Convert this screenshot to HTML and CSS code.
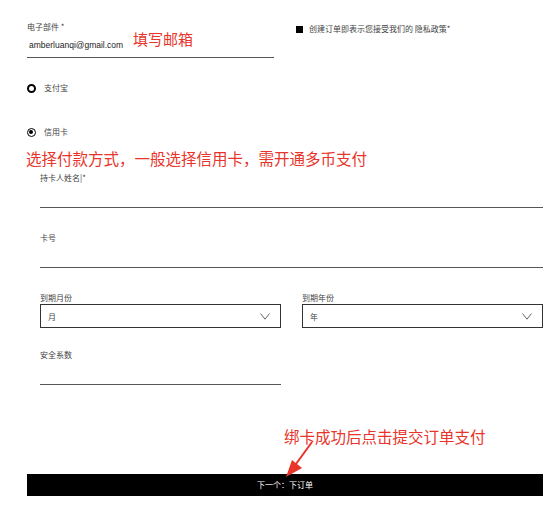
FILE: index.html
```html
<!DOCTYPE html>
<html lang="zh-CN">
<head>
<meta charset="utf-8">
<title>支付</title>
<link rel="stylesheet" href="styles.css">
</head>
<body>
<div class="page">
  <div class="top-row">
    <div class="email-field">
      <div class="label">电子部件 *</div>
      <div class="line-input email-input"><span class="email-text">amberluanqi@gmail.com</span></div>
    </div>
    <div class="consent">
      <span class="check-box"></span>
      <span class="consent-text">创建订单即表示您接受我们的 隐私政策*</span>
    </div>
  </div>

  <div class="radio-row alipay">
    <span class="radio"></span>
    <span class="radio-label">支付宝</span>
  </div>
  <div class="radio-row card">
    <span class="radio checked"></span>
    <span class="radio-label">信用卡</span>
  </div>

  <div class="note note-pay">选择付款方式，一般选择信用卡，需开通多币支付</div>

  <div class="card-form">
    <div class="label first">持卡人姓名|*</div>
    <div class="line-input"></div>

    <div class="label gap">卡号</div>
    <div class="line-input"></div>

    <div class="selects">
      <div class="select-field">
        <div class="label">到期月份</div>
        <div class="select-box"><span>月</span>
          <svg class="chev" width="10" height="7" viewBox="0 0 10 7"><polyline points="0.5,0.5 5,6.2 9.5,0.5" fill="none" stroke="#666" stroke-width="1"/></svg>
        </div>
      </div>
      <div class="select-field">
        <div class="label">到期年份</div>
        <div class="select-box"><span>年</span>
          <svg class="chev" width="10" height="7" viewBox="0 0 10 7"><polyline points="0.5,0.5 5,6.2 9.5,0.5" fill="none" stroke="#666" stroke-width="1"/></svg>
        </div>
      </div>
    </div>

    <div class="label gap2">安全系数</div>
    <div class="line-input short"></div>
  </div>

  <button class="submit">下一个：下订单</button>

  <div class="note note-email">填写邮箱</div>
  <div class="note note-submit">绑卡成功后点击提交订单支付</div>
  <svg class="arrow" width="40" height="40" viewBox="0 0 40 40">
    <line x1="28" y1="2" x2="12" y2="24" stroke="#e8342a" stroke-width="2"/>
    <polygon points="2,37 8,20 18,28" fill="#e8342a"/>
  </svg>
</div>
</body>
</html>
```

FILE: styles.css
```css
* { box-sizing: border-box; }
html, body { margin: 0; padding: 0; background: #fff; }
body {
  font-family: "Noto Sans CJK SC", "Liberation Sans", sans-serif;
  color: #333;
  width: 554px;
  height: 513px;
  overflow: hidden;
}
.page {
  position: relative;
  padding: 22px 11px 0 27px;
  width: 554px;
  height: 513px;
}
.label {
  font-size: 8px;
  line-height: 10px;
  color: #444;
  white-space: nowrap;
}
.top-row {
  display: flex;
  align-items: flex-start;
}
.email-field {
  width: 247px;
}
.line-input {
  height: 26px;
  border-bottom: 1px solid #555;
}
.email-input {
  padding: 8px 0 0 2px;
  height: 26px;
  font-size: 8.5px;
  line-height: 10px;
}
.email-text {
  display: block;
  font-family: "Liberation Sans", sans-serif;
  font-size: 8.5px;
  line-height: 10px;
  color: #222;
}
.consent {
  display: flex;
  align-items: center;
  gap: 6px;
  margin-left: 22px;
  margin-top: 2px;
}
.check-box {
  width: 7px;
  height: 7px;
  background: #000;
}
.consent-text {
  font-size: 8px;
  line-height: 10px;
  color: #444;
  white-space: nowrap;
}
.radio-row {
  display: flex;
  align-items: center;
  gap: 8px;
  height: 10px;
}
.alipay { margin-top: 25px; }
.card { margin-top: 34px; }
.radio {
  width: 9px;
  height: 9px;
  border: 2px solid #000;
  border-radius: 50%;
  background: #fff;
  position: relative;
}
.radio.checked {
  border-width: 1.5px;
}
.radio.checked::after {
  content: "";
  position: absolute;
  left: 1px;
  top: 1px;
  width: 4px;
  height: 4px;
  border-radius: 50%;
  background: #000;
}
.radio-label {
  font-size: 8px;
  line-height: 10px;
  color: #444;
}
.note {
  color: #e8342a;
  font-size: 15.5px;
  line-height: 18px;
  white-space: nowrap;
}
.note-pay {
  margin-top: 12px;
  margin-left: -1px;
}
.card-form {
  margin-left: 13px;
  width: 503px;
}
.card-form .first { margin-top: 6px; }
.card-form .gap { margin-top: 25px; }
.card-form .line-input { height: 25px; }
.selects {
  display: flex;
  gap: 21px;
  margin-top: 25px;
}
.select-field {
  width: 241px;
}
.select-box {
  margin-top: 1px;
  height: 24px;
  border: 1px solid #333;
  display: flex;
  align-items: center;
  justify-content: space-between;
  padding: 0 10px 0 7px;
  font-size: 8px;
  color: #444;
}
.chev { display: block; }
.card-form .gap2 { margin-top: 22px; }
.card-form .line-input.short {
  width: 241px;
  height: 25px;
}
.submit {
  display: block;
  margin-top: 89px;
  width: 516px;
  height: 22px;
  background: #000;
  color: #fff;
  border: 0;
  font-family: "Noto Sans CJK SC", sans-serif;
  font-size: 8px;
  line-height: 22px;
  padding: 0;
  text-align: center;
}
.note-email {
  position: absolute;
  left: 133px;
  top: 30px;
  font-size: 15px;
}
.note-submit {
  position: absolute;
  left: 284px;
  top: 427px;
}
.arrow {
  position: absolute;
  left: 284px;
  top: 440px;
}
```
